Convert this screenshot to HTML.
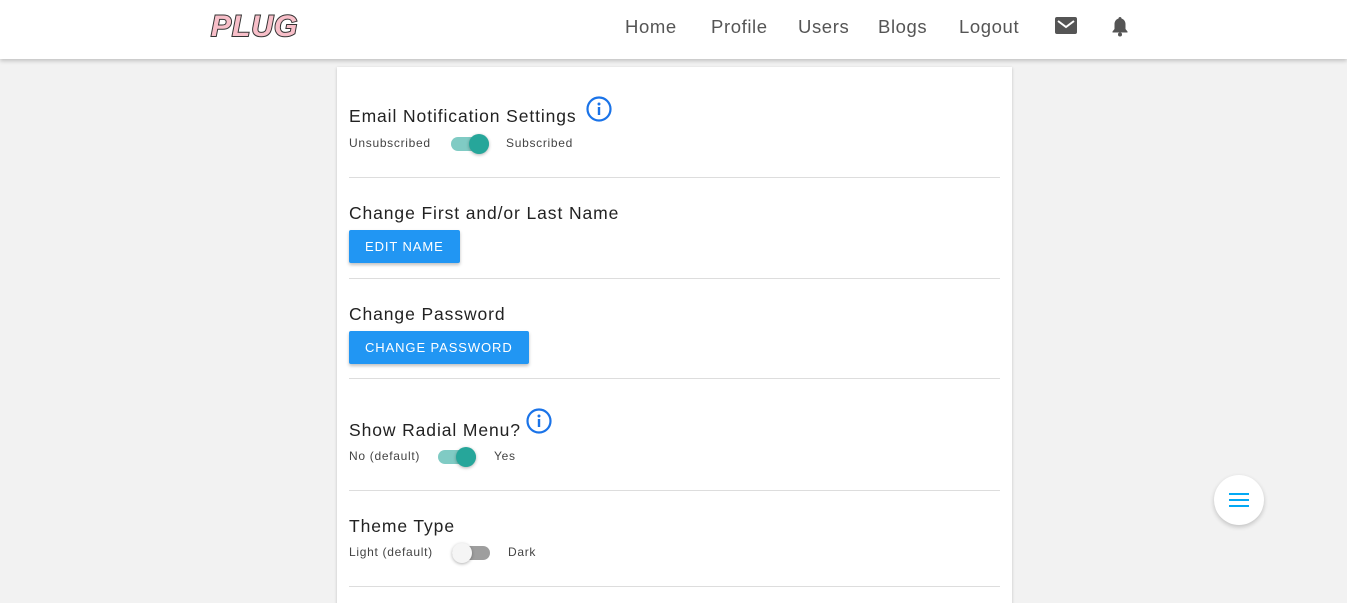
<!DOCTYPE html>
<html><head><meta charset="utf-8"><style>
*{box-sizing:border-box;margin:0;padding:0}
html,body{width:1347px;height:603px;overflow:hidden}
body{background:#f2f2f2;font-family:"Liberation Sans",sans-serif;color:#222;position:relative}
.nav{position:absolute;top:0;left:0;width:1347px;height:59px;background:#fff;box-shadow:0 2px 4px rgba(0,0,0,.2);z-index:2}
.logo{position:absolute;left:211px;top:10px;font-size:30px;font-weight:bold;font-style:italic;color:#f8bfc9;-webkit-text-stroke:2px #333;paint-order:stroke fill;letter-spacing:1px}
.links a{position:absolute;top:16px;font-size:18.5px;color:#555;text-decoration:none;letter-spacing:.6px}
.card{position:absolute;left:337px;top:67px;width:675px;height:560px;background:#fff;box-shadow:0 1px 3px rgba(0,0,0,.2)}
.t{position:absolute;left:12px;font-size:17.5px;color:#222;letter-spacing:.9px}
.s{position:absolute;font-size:12px;color:#444;letter-spacing:.7px}
.hr{position:absolute;left:12px;width:651px;height:1px;background:#ddd}
.btn{position:absolute;left:12px;height:33px;background:#2196f3;color:#fff;font-size:13px;line-height:33px;padding:0 16px;border-radius:2px;box-shadow:0 2px 3px rgba(0,0,0,.25);letter-spacing:.9px}
.tr{position:absolute;width:38px;height:14px;border-radius:7px}
.th{position:absolute;top:-3px;width:20px;height:20px;border-radius:50%;box-shadow:0 1px 3px rgba(0,0,0,.3)}
.fab{position:absolute;left:1214px;top:475px;width:50px;height:50px;border-radius:50%;background:#fff;box-shadow:0 2px 5px rgba(0,0,0,.2)}
</style></head><body>
<div class="nav">
<div class="logo">PLUG</div>
<div class="links"><a style="left:625px">Home</a><a style="left:711px">Profile</a><a style="left:798px">Users</a><a style="left:878px">Blogs</a><a style="left:959px">Logout</a></div>
<svg style="position:absolute;left:1055px;top:17px" width="22" height="18" viewBox="0 0 22 18"><rect x="0" y="0" width="22" height="17" rx="2" fill="#555"/><path d="M3 4l8 6 8-6" stroke="#fff" stroke-width="2" fill="none"/></svg>
<svg style="position:absolute;left:1111px;top:16px" width="18" height="21" viewBox="0 0 18 21"><path d="M9 1c1 0 1.5.7 1.5 1.5C13 3.3 14.5 5.5 14.5 8v5l2 2.5v1H1.5v-1L3.5 13V8c0-2.5 1.5-4.7 4-5.5C7.5 1.7 8 1 9 1z" fill="#555"/><circle cx="9" cy="18.5" r="2" fill="#555"/></svg>
</div>
<div class="card">
<div class="t" style="top:39px">Email Notification Settings</div>
<svg style="position:absolute;left:249px;top:29px" width="26" height="26" viewBox="0 0 26 26"><circle cx="13" cy="13" r="11.5" stroke="#1a73e8" stroke-width="2.2" fill="none"/><circle cx="13" cy="8" r="1.5" fill="#1a73e8"/><rect x="11.8" y="11" width="2.4" height="8" fill="#1a73e8"/></svg>
<div class="s" style="left:12px;top:69px">Unsubscribed</div>
<div class="tr" style="left:114px;top:70px;background:#80cbc4"><div class="th" style="left:18px;background:#26a69a"></div></div>
<div class="s" style="left:169px;top:69px">Subscribed</div>
<div class="hr" style="top:110px"></div>
<div class="t" style="top:136px">Change First and/or Last Name</div>
<div class="btn" style="top:163px">EDIT NAME</div>
<div class="hr" style="top:211px"></div>
<div class="t" style="top:237px">Change Password</div>
<div class="btn" style="top:264px">CHANGE PASSWORD</div>
<div class="hr" style="top:311px"></div>
<div class="t" style="top:353px">Show Radial Menu?</div>
<svg style="position:absolute;left:189px;top:341px" width="26" height="26" viewBox="0 0 26 26"><circle cx="13" cy="13" r="11.5" stroke="#1a73e8" stroke-width="2.2" fill="none"/><circle cx="13" cy="8" r="1.5" fill="#1a73e8"/><rect x="11.8" y="11" width="2.4" height="8" fill="#1a73e8"/></svg>
<div class="s" style="left:12px;top:382px">No (default)</div>
<div class="tr" style="left:101px;top:383px;background:#80cbc4"><div class="th" style="left:18px;background:#26a69a"></div></div>
<div class="s" style="left:157px;top:382px">Yes</div>
<div class="hr" style="top:423px"></div>
<div class="t" style="top:449px">Theme Type</div>
<div class="s" style="left:12px;top:478px">Light (default)</div>
<div class="tr" style="left:115px;top:479px;background:#9e9e9e"><div class="th" style="left:0;background:#f5f5f5"></div></div>
<div class="s" style="left:171px;top:478px">Dark</div>
<div class="hr" style="top:519px"></div>
</div>
<div class="fab"><svg style="position:absolute;left:15px;top:17px" width="20" height="16"><rect y="1" width="20" height="2" fill="#03a9f4"/><rect y="7" width="20" height="2" fill="#03a9f4"/><rect y="13" width="20" height="2" fill="#03a9f4"/></svg></div>
</body></html>
